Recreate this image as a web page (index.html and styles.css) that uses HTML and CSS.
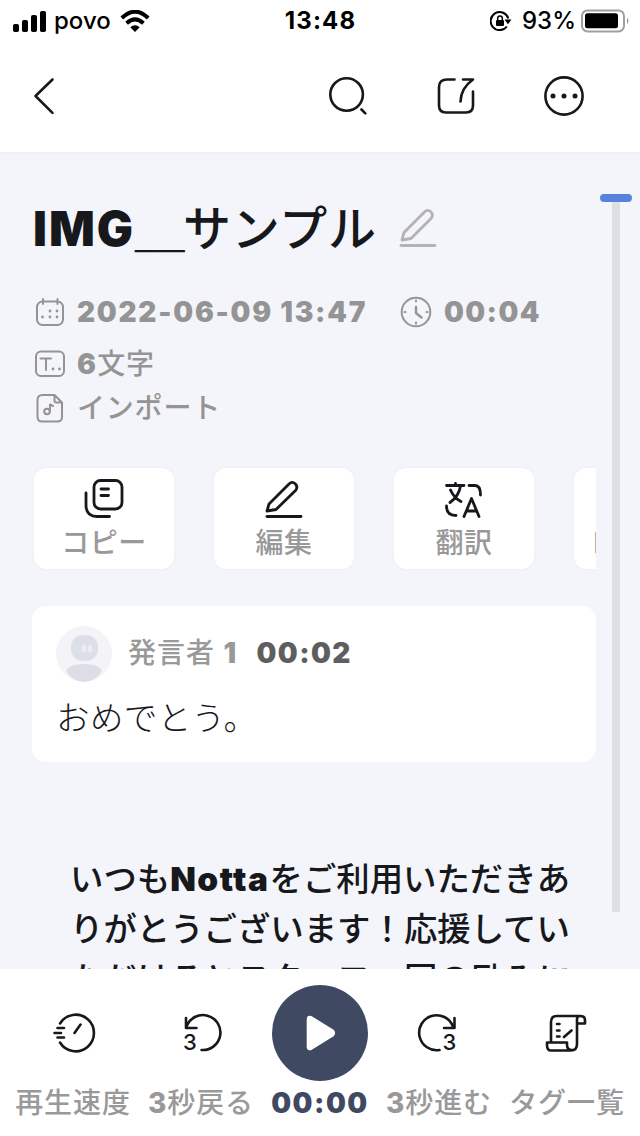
FILE: index.html
```html
<!DOCTYPE html>
<html lang="ja">
<head>
<meta charset="utf-8">
<title>IMG__サンプル</title>
<link rel="stylesheet" href="styles.css">
</head>
<body>
<header class="status">
  <div class="status-left">
    <svg width="33" height="21" viewBox="0 0 33 21"><rect x="0" y="13" width="6" height="8" rx="1.8"/><rect x="9" y="9" width="6" height="12" rx="1.8"/><rect x="18" y="4" width="6" height="17" rx="1.8"/><rect x="27" y="0" width="6" height="21" rx="1.8"/></svg>
    <span class="carrier">povo</span>
    <svg class="wifi" width="30" height="22" viewBox="0 0 30 22"><g fill="none" stroke="#000" stroke-width="4"><path d="M1.800 8Q15-4.500 28.200 8"/><path d="M6.600 13.200Q15 5.400 23.400 13.200"/></g><path d="M10.300 17.300Q15 13.200 19.700 17.300L15 22Z"/></svg>
  </div>
  <span class="clock">13:48</span>
  <div class="status-right">
    <svg width="22" height="20" viewBox="0 0 22 20"><path d="M16.900 15.500A9 9 0 1 1 18.300 7.500" fill="none" stroke="#000" stroke-width="2"/><path d="M14.500 8.500h7l-3.600 4.800Z"/><rect x="6" y="9" width="8" height="6" rx="1"/><path d="M7.700 9V7.300a2.300 2.300 0 0 1 4.600 0V9" fill="none" stroke="#000" stroke-width="1.500"/></svg>
    <span class="percent">93%</span>
    <svg width="48" height="24" viewBox="0 0 48 24"><rect x="1" y="1.400" width="42" height="21" rx="5.500" fill="none" stroke="#a0a0a0" stroke-width="2"/><rect x="4" y="4.300" width="33" height="15" rx="2.500"/><path d="M46 8.500Q49 12 46 15Z" fill="#999"/></svg>
  </div>
</header>
<nav class="nav">
  <svg class="back" width="24" height="40" viewBox="0 0 24 40"><path d="M20.500 3.500L3.500 20L20.500 36.800"/></svg>
  <div class="nav-actions">
    <svg width="40" height="40" viewBox="0 0 40 40"><circle cx="19.600" cy="18.500" r="16.300"/><path d="M34.500 33.500l3.800 3.800"/></svg>
    <svg width="40" height="40" viewBox="0 0 40 40"><path d="M19.500 3.500H12Q4 3.500 4 11V29.500Q4 36.500 11 36.500H31Q38 36.500 38 29.500V15.500M28 3.500H38Q26 12 25.500 25.500"/></svg>
    <svg width="42" height="42" viewBox="0 0 42 42"><circle cx="21" cy="21" r="18.600"/><g fill="#17181c" stroke="none"><circle cx="10" cy="21" r="2.500"/><circle cx="21" cy="21" r="2.500"/><circle cx="32" cy="21" r="2.500"/></g></svg>
  </div>
</nav>
<main class="content">
  <div class="column">
    <h1 class="title"><span class="heavy">IMG</span><span class="rule">__</span><span class="jp">サンプル</span>
      <svg class="pencil" width="40" height="42" viewBox="0 0 40 42"><path d="M3 33L5 25.500L25.500 5Q28.500 2 31.500 4.500Q35 8 32 11.500L12 31.500Z"/><path d="M2 38.500H36"/></svg></h1>
    <section class="meta">
      <div class="meta-row first">
        <svg width="30" height="30" viewBox="0 0 30 30"><rect x="2" y="4.500" width="26" height="23.500" rx="5.500"/><path d="M8 2V7M22.500 2V7"/><g fill="#949494" stroke="none"><circle cx="15" cy="14" r="1.400"/><circle cx="22" cy="14" r="1.400"/><circle cx="7.500" cy="20" r="1.400"/><circle cx="15" cy="20" r="1.400"/><circle cx="22" cy="20" r="1.400"/></g></svg>
        <span class="num date">2022-06-09 13:47</span>
        <svg width="32" height="32" viewBox="0 0 32 32"><circle cx="16" cy="16" r="14.300"/><path d="M16 11V17L21.500 21.500" stroke-width="2.400"/><path d="M16 4.500V5.500M16 26.500V27.500M4.500 16H5.500M26.500 16H27.500"/></svg>
        <span class="num">00:04</span>
      </div>
      <div class="meta-row second">
        <svg width="30" height="30" viewBox="0 0 30 30"><rect x="1" y="2.500" width="28" height="24.500" rx="5"/><path d="M5.500 9.500H16M11 9.500V21"/><g fill="#949494" stroke="none"><circle cx="18" cy="20" r="1.400"/><circle cx="24.500" cy="20" r="1.400"/></g></svg>
        <span><span class="num">6</span>文字</span>
      </div>
      <div class="meta-row third">
        <svg width="30" height="30" viewBox="0 0 30 30"><path d="M19.500 2H7.500Q2.500 2 2.500 7V24Q2.500 28.500 7.500 28.500H22Q27 28.500 27 24V9.500L19.500 2V7.500Q19.500 9.500 21.500 9.500H27"/><circle cx="12" cy="18.500" r="2.800"/><path d="M15 18.500V11.500L18 13"/></svg>
        <span>インポート</span>
      </div>
    </section>
    <section class="actions">
      <div class="action"><svg width="44" height="44" viewBox="0 0 44 44"><rect x="12" y="2.500" width="28" height="28.500" rx="6.500"/><path d="M19 11H26.500M19 17.500H26.500M4 15V27Q4 38.500 15 38.500H27.500"/></svg><span>コピー</span></div>
      <div class="action"><svg width="44" height="44" viewBox="0 0 44 44"><path d="M5 33L7 26L27 6Q30 3 33 5.500Q36.500 9 33.500 12.500L14 31.500Z"/><path d="M5 38.500H39"/></svg><span>編集</span></div>
      <div class="action"><svg width="44" height="44" viewBox="0 0 44 44"><path d="M4.500 7.500H22M13.500 5.500V7M18.500 8Q17 18 8 24.500M8.500 12Q12 20 19 23.500M27 7.500H33Q38.500 7.500 38.500 17M4.500 28Q4.500 37.500 14 37.500M22 38.500L29.500 20.500L37 38.500M25 33H34.500"/></svg><span>翻訳</span></div>
      <div class="action"><span>PDF</span></div>
    </section>
    <article class="card">
      <div class="speaker">
        <svg width="56" height="56" viewBox="0 0 56 56"><circle cx="28" cy="28" r="28" fill="#f4f4f8"/><rect x="15" y="9" width="27" height="26" rx="12" fill="#dddfe8"/><path d="M10 45Q13 38 28 38Q43 38 46 45Q39 56 28 56Q17 56 10 45Z" fill="#dcdde6"/><ellipse cx="28" cy="22.500" rx="2.300" ry="4" fill="#e9ecf7"/><ellipse cx="34" cy="22.500" rx="2.300" ry="4" fill="#e9ecf7"/></svg>
        <span class="name">発言者 <span class="num">1</span></span><span class="num time">00:02</span>
      </div>
      <p class="speech">おめでとう。</p>
    </article>
    <p class="notice">いつも<span class="notta">Notta</span>をご利用いただきあ<br>りがとうございます！応援してい<br>ただけるとスタッフ一同の励みに</p>
  </div>
  <div class="scroller"><div class="thumb"></div><div class="track"></div></div>
</main>
<footer class="player">
  <div class="tool"><svg width="48" height="48" viewBox="0 0 48 48"><path d="M11 14.500A18.300 18.300 0 1 1 11 33.500M8.500 19H15M5.500 24H12M8.500 28.500H15M25.500 24L31.500 15.500"/></svg><span>再生速度</span></div>
  <div class="tool"><svg width="48" height="48" viewBox="0 0 48 48"><path d="M9.500 17.500A17.500 17.500 0 1 1 24.500 41M9 9V19H19.500"/><text x="6" y="41">3</text></svg><span><b>3</b>秒戻る</span></div>
  <div class="tool play"><svg width="96" height="96" viewBox="0 0 96 96"><circle cx="48" cy="48" r="48" fill="#3f4a62" stroke="none"/><path d="M36 34.500Q36 31 39.500 32.500L60.500 45.500Q63 48 60.500 50.500L39.500 63.500Q36 65 36 62Z" fill="#fff" stroke="#fff"/></svg><span>00:00</span></div>
  <div class="tool"><svg width="48" height="48" viewBox="0 0 48 48"><path d="M38 17.500A17.500 17.500 0 1 0 24.500 41M39.500 9V19H29"/><text x="27.500" y="41">3</text></svg><span><b>3</b>秒進む</span></div>
  <div class="tool"><svg width="48" height="48" viewBox="0 0 48 48"><path d="M8 33V13Q8 7 14 7H37Q42 7 42 11V14.500H34V35Q34 41.500 28 41.500H8Q4 41.500 4 36V33.500H24V36Q24 41 29 41M34 14V10Q34 7 37 7M14 15H16.500M14 21.500H16.500M14 27.500H16.500M21 28L28.500 21.500"/></svg><span>タグ一覧</span></div>
</footer>
</body>
</html>
```
FILE: styles.css
```css
* { box-sizing: border-box; }
body {
  margin: 0;
  width: 640px;
  height: 1136px;
  overflow: hidden;
  display: flex;
  flex-direction: column;
  background: #fff;
  color: #17181c;
  font-family: "Inter", "Noto Sans CJK JP", sans-serif;
}
svg { flex: none; display: block; }
p, h1 { margin: 0; }

.status {
  height: 40px;
  display: grid;
  grid-template-columns: 1fr 80px 1fr;
  color: #000;
  font-size: 24px;
  line-height: 42px;
}
.status-left { display: flex; align-items: center; padding-left: 13px; }
.carrier { margin-left: 8px; font-weight: 500; }
.wifi { margin-left: 9px; }
.clock { text-align: center; font-weight: 700; letter-spacing: 1.200px; padding-left: 1px; }
.status-right { display: flex; align-items: center; justify-content: flex-end; padding-right: 11px; }
.percent { margin: 0 5px 0 10px; font-weight: 500; }

.nav {
  height: 112px;
  display: flex;
  align-items: center;
  justify-content: space-between;
  padding: 0 55px 0 32px;
}
.nav svg { fill: none; stroke: #17181c; stroke-width: 2.600; stroke-linecap: round; stroke-linejoin: round; }
.nav-actions { display: flex; align-items: center; gap: 68px; }

.content {
  flex: none;
  height: 817px;
  display: flex;
  justify-content: space-between;
  overflow: hidden;
  background: #f4f5fa;
  border-top: 2px solid #f1f1f4;
  padding: 0 8px 0 32px;
}
.column { width: 564px; }
.title {
  height: 72px;
  margin-top: 38px;
  display: flex;
  align-items: center;
  font-size: 48px;
  line-height: 72px;
  font-weight: 700;
  white-space: nowrap;
}
.heavy { font-weight: 900; letter-spacing: 2px; padding: 2px 0 0 1px; width: 102px; }
.rule { font-family: "Noto Sans CJK JP", sans-serif; font-weight: 300; letter-spacing: -1.500px; width: 49px; margin-top: -6px; }
.title .jp { font-weight: 500; letter-spacing: 0.800px; margin-top: 1px; }
.pencil { margin-left: 22px; fill: none; stroke: #b3b3b5; stroke-width: 2.800; stroke-linecap: round; stroke-linejoin: round; }

.meta { color: #949494; font-size: 28px; font-weight: 500; line-height: 44px; }
.meta svg { fill: none; stroke: #949494; stroke-width: 2; stroke-linecap: round; stroke-linejoin: round; }
.meta-row { display: flex; align-items: center; padding-left: 3px; height: 44px; white-space: nowrap; letter-spacing: 0.800px; }
.meta-row > span { margin-left: 12px; }
.first { margin-top: 26px; }
.second { margin-top: 8px; }
.num { font-weight: 900; letter-spacing: 1.400px; }
.date { width: 291px; margin-right: 32px; letter-spacing: 1.750px; }

.actions { display: flex; gap: 40px; margin-top: 37px; overflow: hidden; padding: 1px 2px; }
.action {
  flex: none;
  width: 140px;
  height: 101px;
  display: flex;
  flex-direction: column;
  align-items: center;
  justify-content: flex-end;
  padding-bottom: 5px;
  background: #fff;
  border-radius: 12px;
  box-shadow: 0 0 2px #e3e4e9;
}
.action svg { fill: none; stroke: #17181c; stroke-width: 2.800; stroke-linecap: round; stroke-linejoin: round; }
.action span { color: #999; font-size: 28px; font-weight: 500; line-height: 42px; letter-spacing: 0.500px; }
.action:last-child { align-items: flex-start; padding-left: 19px; }

.card {
  height: 156px;
  margin-top: 36px;
  padding: 20px 24px;
  background: #fff;
  border-radius: 14px;
}
.speaker { display: flex; align-items: center; height: 56px; line-height: 42px; white-space: nowrap; }
.name { margin: -3px 0 0 16px; color: #999; font-size: 28px; font-weight: 500; letter-spacing: 1px; }
.time { margin: -3px 0 0 19px; color: #5e5e5e; font-size: 28px; }
.speech { margin-top: 11px; font-size: 33.500px; line-height: 50px; font-weight: 300; letter-spacing: 0.400px; }

.notice {
  margin: 92px 0 0 38px;
  font-size: 33.400px;
  line-height: 50px;
  font-weight: 500;
  white-space: nowrap;
}
.notta { font-weight: 900; letter-spacing: 1.500px; }
.scroller { width: 32px; margin-top: 40px; display: flex; flex-direction: column; align-items: center; }
.thumb { width: 32px; height: 8px; border-radius: 4px; background: #5982dc; }
.track { width: 8px; height: 710px; background: #dfe0e4; }

.player {
  height: 167px;
  display: grid;
  grid-template-columns: 146px 110px 128px 110px 146px;
  background: #fff;
  padding-top: 16px;
}
.tool { display: flex; flex-direction: column; align-items: center; white-space: nowrap; }
.tool svg { margin: 24px 0; fill: none; stroke: #17181c; stroke-width: 2.600; stroke-linecap: round; stroke-linejoin: round; }
.tool svg text { fill: #17181c; stroke: none; font-size: 22px; font-weight: 500; }
.tool > span { color: #999; font-size: 28px; font-weight: 500; line-height: 44px; letter-spacing: 0.900px; }
.tool b { font-weight: 800; }
.tool.play svg { margin: 0; }
.tool.play > span { color: #3f4a62; font-weight: 900; letter-spacing: 1.500px; }
```
